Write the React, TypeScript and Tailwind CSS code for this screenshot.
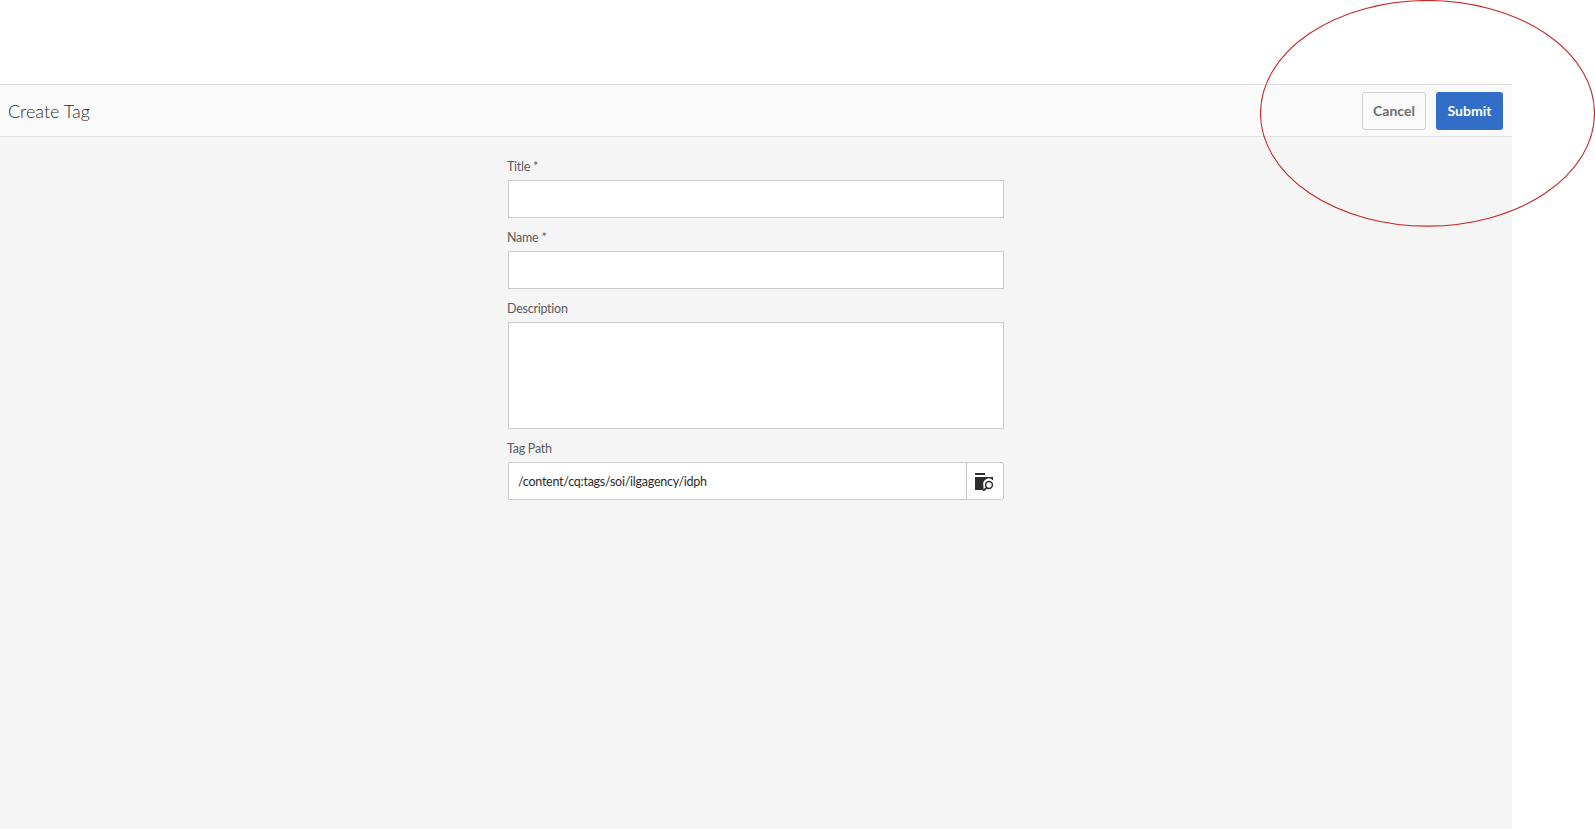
import React from "react";

function Label({ children }: { children: React.ReactNode }) {
  return <label className="-ml-px block h-[18px] text-[12.5px] leading-[18px] tracking-[-0.25px] text-[#5c5c5c]">{children}</label>;
}

export default function App() {
  return (
    <div className="relative h-[829px] w-[1595px] overflow-hidden bg-white font-['Lato','Noto_Sans',sans-serif]">
      <div className="flex h-[829px] w-[1512px] flex-col pt-[84px]">
        <header className="flex h-[53px] items-center justify-between border-y border-[#e1e1e1] bg-[#fafafa] pl-2 pr-[9px]">
          <h1 className="pt-[2px] text-[18px] font-light text-[#2c2c2c]">Create Tag</h1>
          <div className="flex gap-[10px] pt-px">
            <button className="h-[38px] w-[64px] rounded-[3px] border border-[#cfcfcf] bg-[#fafafa] pb-[2px] text-[14px] font-bold text-[#6e6e6e]">Cancel</button>
            <button className="h-[38px] w-[67px] rounded-[3px] bg-[#326ec8] pb-[2px] text-[14px] font-bold text-white">Submit</button>
          </div>
        </header>
        <main className="flex flex-1 justify-center bg-[#f5f5f5] pt-[21px]">
          <form className="flex w-[496px] flex-col">
            <Label>Title *</Label>
            <input className="mt-[4px] h-[38px] w-full border border-[#cacaca] bg-white" />
            <div className="mt-[11px]"><Label>Name *</Label></div>
            <input className="mt-[4px] h-[38px] w-full border border-[#cacaca] bg-white" />
            <div className="mt-[11px]"><Label>Description</Label></div>
            <textarea className="mt-[4px] h-[107px] w-full resize-none border border-[#cacaca] bg-white" />
            <div className="mt-[11px]"><Label>Tag Path</Label></div>
            <div className="mt-[4px] flex h-[38px] w-full rounded-r-[3px] border border-[#cacaca] bg-white">
              <div className="flex flex-1 items-center pl-[9px] pt-[3px] text-[12.5px] tracking-[-0.25px] text-[#2c2c2c]">/content/cq:tags/soi/ilgagency/idph</div>
              <div className="flex w-[37px] items-center border-l border-[#cacaca] pl-[8px] pt-[2px]">
                <svg width="20" height="18" viewBox="0 0 20 18">
                  <rect x="0" y="0" width="10" height="2" fill="#2c2c2c" />
                  <path d="M0 4h18v3.4a5.6 5.6 0 0 0-9.6 5.2l.2 4.4H0z" fill="#2c2c2c" />
                  <circle cx="14" cy="12" r="3.4" fill="none" stroke="#2c2c2c" strokeWidth="1.5" />
                  <path d="M11.4 14.8 8.8 17.4" stroke="#2c2c2c" strokeWidth="1.8" strokeLinecap="round" />
                </svg>
              </div>
            </div>
          </form>
        </main>
      </div>
      <svg className="pointer-events-none absolute left-[1260px] top-0" width="335" height="227" viewBox="0 0 335 227">
        <ellipse cx="167.5" cy="113.3" rx="167" ry="112.8" fill="none" stroke="#c62828" strokeWidth="1.1" />
      </svg>
    </div>
  );
}
